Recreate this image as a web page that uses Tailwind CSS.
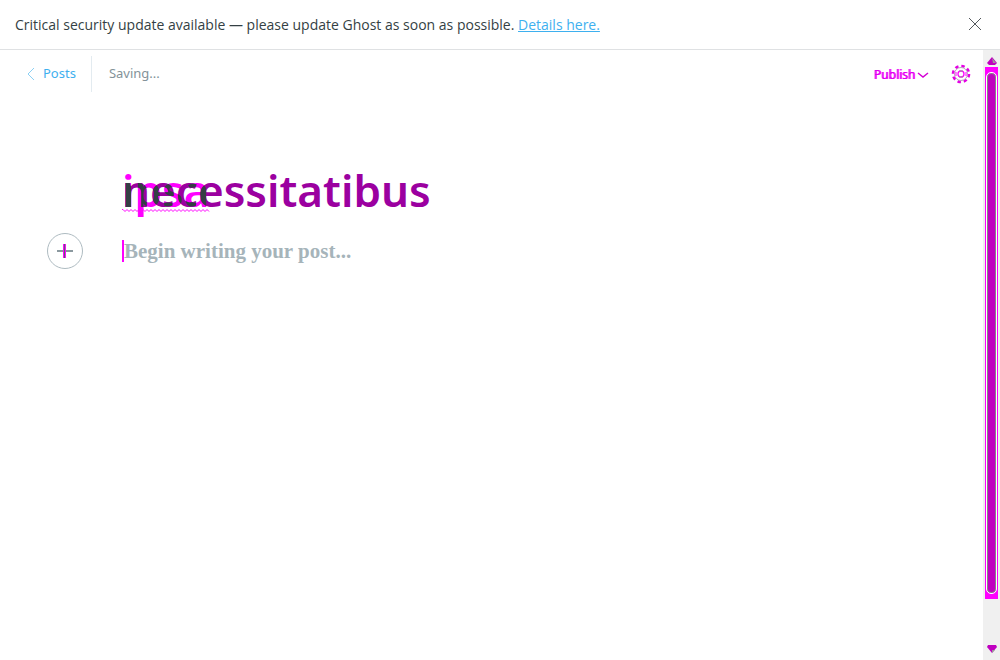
<!DOCTYPE html>
<html lang="en"><head><meta charset="utf-8"><title>Ghost editor</title>
<script src="https://cdn.jsdelivr.net/npm/@tailwindcss/browser@4"></script></head>
<body class="flex h-screen flex-col overflow-hidden bg-white font-['Noto_Sans',sans-serif] text-[13px] text-[#343f44]">
<aside class="flex h-[50px] shrink-0 items-center justify-between border-b border-[#dfe1e3] px-[15px]">
<p class="font-['Open_Sans',sans-serif] text-sm">Critical security update available — please update Ghost as soon as possible. <a href="#" class="text-[#3eb0ef] underline">Details here.</a></p>
<button aria-label="Close notification"><svg class="h-5 w-5" viewBox="0 0 20 20" fill="none" stroke="#54595d"><path d="M4 3 16 15M16 3 4 15"/></svg></button>
</aside>
<div class="flex min-h-0 flex-1">
<main class="min-w-0 flex-1">
<header class="flex h-12 items-center justify-between pr-3 pl-[26px]">
<div class="flex items-center">
<a href="#" class="flex items-center gap-2 text-[#3eb0ef]"><svg class="h-3 w-[9px]" viewBox="0 0 9 12" fill="none" stroke="#8bd0f4"><path d="M8 0 2 6 8 12"/></svg>Posts</a>
<span class="ml-[15px] flex h-9 items-center border-l border-[#e3ebf0] pl-[17px] text-[#839299]">Saving...</span>
</div>
<div class="flex items-center gap-[22px]">
<button class="flex items-center gap-0.5 pt-0.5 text-xs text-[#dd00ee] [text-shadow:1px_0_#ff00ff]">Publish<svg class="h-2 w-3" viewBox="0 0 12 8" fill="none" stroke="#d400d4" stroke-width="1.5"><path d="m1 2 5 4 5-4"/></svg></button>
<button aria-label="Settings"><svg class="h-5 w-5" viewBox="0 0 20 20" fill="none"><circle cx="10" cy="10" r="8" stroke="#e400e4" stroke-width="2.6" stroke-dasharray="3.400 2.900"/><circle cx="10" cy="10" r="6.500" stroke="#b9a2bd"/><circle cx="10" cy="10" r="3" stroke="#ff00ff" stroke-width="1.300"/><path stroke="#999" d="M8 7h4M8 13h4"/><path stroke="#ff00ff" d="M5 8v4M15 8v4"/></svg></button>
</div>
</header>
<section class="pt-[60px] pl-[47px]">
<h1 class="pl-[75px]">
<svg class="h-16 w-full overflow-visible font-['Noto_Sans',sans-serif] text-[44px] font-semibold">
<g fill="#ff00ff"><text id="draft-title" x="0" y="49">ipsa</text></g>
<g fill="#9b00a0"><text id="saved-title" x="0" y="49">necessitatibus</text></g>
<clipPath id="shared-ink"><use href="#draft-title"/></clipPath>
<g clip-path="url(#shared-ink)"><use href="#saved-title" fill="#343f44"/></g>
<path d="M0 51.500h1l2 2 2-2 2 2 2-2 2 2 2-2 2 2 2-2 2 2 2-2 2 2 2-2 2 2 2-2 2 2 2-2 2 2 2-2 2 2 2-2 2 2 2-2 2 2 2-2 2 2 2-2 2 2 2-2 2 2 2-2 2 2 2-2 2 2 2-2 2 2 2-2 2 2 2-2 2 2 2-2 2 2 2-2 2 2" fill="none" stroke="#ff00ff"/>
</svg></h1>
<div class="mt-[11px] flex items-center gap-[39px]"><button aria-label="Add card" class="grid h-9 w-9 place-items-center rounded-full border border-[#aebbc1]"><svg class="h-4 w-4" viewBox="0 0 16 16"><path d="M0 7h16v2H0z" fill="#8b999f"/><path d="M6 1h3v14H6z" fill="#ff00ff"/><path d="M7 1h1v14H7z" fill="#596b73"/></svg></button><p class="border-l-2 border-[#ff00ff] font-['Liberation_Serif',serif] text-[21px] leading-[22px] font-bold text-[#a6b4ba]">Begin writing your post...</p></div>
</section>
</main>
<div aria-hidden="true" class="flex w-[17px] flex-col items-center bg-[#f0f0f0] pt-[7px] pb-[6px]">
<svg class="h-2.5 w-2.5 shrink-0" viewBox="0 0 10 10"><path d="M5 0 10 6 8 8H2L0 6z" fill="#c000c0"/><path d="M5 1 9 6H6z" fill="#999"/></svg>
<div class="mb-[45px] flex w-[13px] flex-1 justify-center bg-[#ff00ff] py-1.5"><div class="w-[9px] rounded border border-[#858585] bg-[#c000c0] outline outline-[#ffffff]"></div></div>
<svg class="h-2.5 w-2.5 shrink-0" viewBox="0 0 10 10"><path d="M1 1H9L10 3 5 9 0 3z" fill="#c000c0"/><path d="M5 6h3L5 9z" fill="#999"/></svg>
</div>
</div>
</body></html>
